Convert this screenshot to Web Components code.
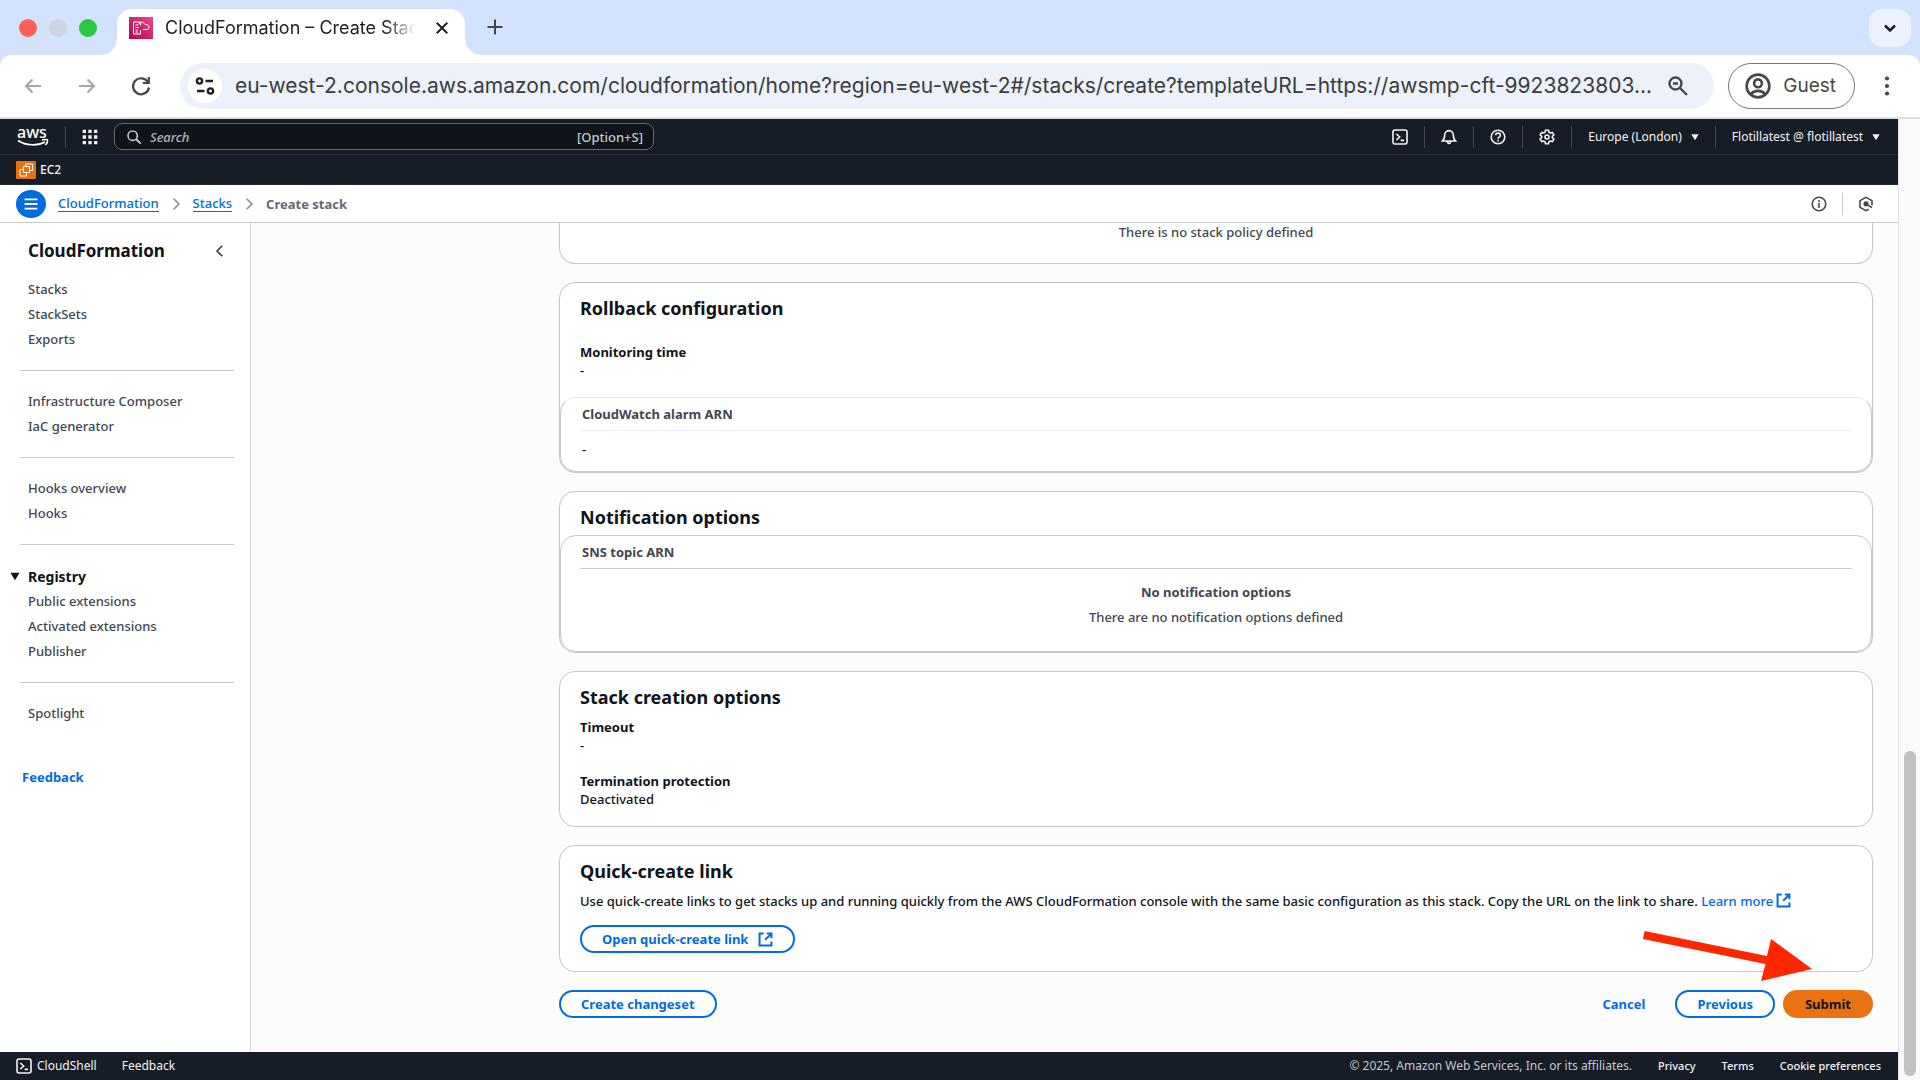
<!DOCTYPE html>
<html lang="en">
<head>
<meta charset="utf-8">
<title>CloudFormation – Create Stack</title>
<style>
  html, body { height: 100%; margin: 0; }
  body {
    font-family: 'Noto Sans', 'Open Sans', sans-serif;
    font-size: 13px;
    font-weight: 500;
    line-height: 18px;
    color: #0f141a;
    overflow: hidden;
    --blue: #006ce0;
    --line: #c6c6cd;
    --navy: #161d26;
    --grey: #424650;
  }
</style>
</head>
<body>
<browser-window>
  <browser-tabs slot="chrome"></browser-tabs>
  <browser-toolbar slot="chrome"></browser-toolbar>
  <console-page>
    <console-header slot="top"></console-header>
    <console-breadcrumbs slot="top"></console-breadcrumbs>
    <side-nav slot="side"></side-nav>

    <panel-card clipped>
      <empty-state>There is no stack policy defined</empty-state>
    </panel-card>

    <panel-card heading="Rollback configuration" spacious>
      <key-value label="Monitoring time">-</key-value>
      <simple-table slot="table" column="CloudWatch alarm ARN" light>-</simple-table>
    </panel-card>

    <panel-card heading="Notification options">
      <simple-table slot="table" column="SNS topic ARN">
        <empty-state heading="No notification options">There are no notification options defined</empty-state>
      </simple-table>
    </panel-card>

    <panel-card heading="Stack creation options">
      <key-value label="Timeout">-</key-value>
      <key-value label="Termination protection">Deactivated</key-value>
    </panel-card>

    <panel-card heading="Quick-create link">
      <quick-create></quick-create>
    </panel-card>

    <form-actions></form-actions>
    <console-footer slot="bottom"></console-footer>
  </console-page>
</browser-window>

<script>
const ICONS = {
  back: '<path d="M20 12H5M11.5 5.500L5 12l6.500 6.500" stroke-width="2"/>',
  forward: '<path d="M4 12h15M12.500 5.500L19 12l-6.500 6.500" stroke-width="2"/>',
  reload: '<path d="M19 8.200A8 8 0 1 0 20 13.500M19.800 3v6h-6" stroke-width="2.200"/>',
  tune: '<circle cx="6.500" cy="7" r="2.600"/><path d="M12.500 7H20M4 17h7.500"/><circle cx="17.500" cy="17" r="2.600"/>',
  zoomout: '<circle cx="9.500" cy="9.500" r="6"/><path d="M14 14l7 7M7 9.500h5"/>',
  person: '<circle cx="12" cy="12" r="10.500"/><circle cx="12" cy="9.500" r="3.600"/><path d="M5.500 19.500c3-4 10-4 13 0"/>',
  kebab: '<g fill="currentColor" stroke="none"><circle cx="12" cy="4.500" r="2.100"/><circle cx="12" cy="12" r="2.100"/><circle cx="12" cy="19.500" r="2.100"/></g>',
  close: '<path d="M5 5l14 14M19 5L5 19" stroke-width="2.600"/>',
  plus: '<path d="M12 3v18M3 12h18" stroke-width="2.400"/>',
  down: '<path d="M6 9l6 6 6-6" stroke-width="3"/>',
  right: '<path d="M8 3l9 9-9 9" stroke-width="2.800"/>',
  left: '<path d="M16 3l-9 9 9 9" stroke-width="3"/>',
  search: '<circle cx="10" cy="10" r="7"/><path d="M15 15l7 7" stroke-width="3"/>',
  grid: '<g fill="currentColor" stroke="none"><path d="M1 1h5v5H1zM9.500 1h5v5h-5zM18 1h5v5h-5zM1 9.500h5v5H1zM9.500 9.500h5v5h-5zM18 9.500h5v5h-5zM1 18h5v5H1zM9.500 18h5v5h-5zM18 18h5v5h-5z"/></g>',
  shell: '<rect x="1.500" y="1.500" width="21" height="21" rx="3"/><path d="M6.500 7.500l5 4.500-5 4.500M13 17h5"/>',
  bell: '<path d="M12 2.500c-4 0-6.500 3-6.500 6.500 0 5-1 7-3.500 9h20c-2.500-2-3.500-4-3.500-9 0-3.500-2.500-6.500-6.500-6.500zM9.500 18.500c0 4 5 4 5 0"/>',
  help: '<circle cx="12" cy="12" r="10.200"/><path d="M8.500 9.500c0-4.500 7-4.500 7 0 0 2.600-3.500 2.600-3.500 5M12 16.200v2.500"/>',
  gear: '<path d="M9.800 1.800h4.400l.8 3 2 1.200 3-.9 2.300 3.800-2.300 2.200v1.800l2.300 2.200-2.300 3.800-3-.9-2 1.200-.8 3H9.800l-.8-3-2-1.200-3 .9-2.300-3.800L4 12.900v-1.800L1.700 8.900 4 5.100l3 .9 2-1.200z"/><circle cx="12" cy="12" r="3"/>',
  info: '<circle cx="12" cy="12" r="10.200"/><path d="M12 10.500V18M12 6v2.600"/>',
  hex: '<path d="M21 14V7l-9-5-9 5v10l9 5 4-2.200"/><circle cx="12" cy="11.500" r="2.600" fill="currentColor"/><path d="M12 12l9 5.500"/>',
  menu: '<path d="M1 4h22M1 12h22M1 20h22" stroke-width="3.200"/>',
  external: '<path d="M9 2.500H2.500v19h19V15M14 2.500h7.500V10M21 3l-9.500 9.500" stroke-width="3.200"/>',
  caret: '<path d="M1 4h22L12 22z" fill="currentColor" stroke="none"/>'
};

class UiIcon extends HTMLElement {
  connectedCallback() {
    const size = this.getAttribute('size') || 16;
    this.attachShadow({ mode: 'open' }).innerHTML = `
      <style>
        :host { display: inline-flex; flex: none; }
        svg { display: block; }
      </style>
      <svg width="${size}" height="${size}" viewBox="0 0 24 24" fill="none" stroke="currentColor" stroke-width="2.400" aria-hidden="true">${ICONS[this.getAttribute('name')]}</svg>
    `;
  }
}

class BrowserWindow extends HTMLElement {
  constructor() {
    super();
    this.attachShadow({ mode: 'open' }).innerHTML = `
      <style>
        :host { display: flex; flex-direction: column; height: 100vh; background: #fff; }
        .view { flex: 1; min-height: 0; display: flex; }
        ::slotted(console-page) { flex: 1; min-width: 0; }
        .scrollbar {
          width: 12px;
          padding: 0 4px 4px 5px;
          border-left: 1px solid #e4e4e4;
          background: #fafafa;
          display: flex;
          flex-direction: column;
          justify-content: flex-end;
        }
        .thumb { height: 34%; border-radius: 6px; background: #c1c1c1; }
      </style>
      <slot name="chrome"></slot>
      <div class="view">
        <slot></slot>
        <div class="scrollbar"><div class="thumb"></div></div>
      </div>
    `;
  }
}

class BrowserTabs extends HTMLElement {
  constructor() {
    super();
    this.attachShadow({ mode: 'open' }).innerHTML = `
      <style>
        :host {
          display: flex;
          align-items: flex-end;
          height: 55px;
          background: #d3e3fd;
          font-family: Inter, 'Liberation Sans', sans-serif;
          font-size: 18px;
          font-weight: 400;
          line-height: 22px;
          color: #1f1f1f;
        }
        button { border: 0; padding: 0; background: none; color: inherit; display: flex; align-items: center; justify-content: center; }
        .lights { display: flex; gap: 12px; padding: 0 20px 18px 19px; }
        .lights i { width: 18px; height: 18px; border-radius: 50%; background: #ff5f57; }
        .lights i:nth-child(2) { background: #cdd4e1; }
        .lights i:nth-child(3) { background: #28c840; }
        .tab {
          position: relative;
          box-sizing: border-box;
          width: 348px;
          height: 46px;
          padding: 0 14px 8px 12px;
          border-radius: 15px 15px 0 0;
          background: #fff;
          display: flex;
          align-items: center;
          gap: 12px;
        }
        .tab::before, .tab::after {
          content: '';
          position: absolute;
          bottom: 0;
          width: 15px;
          height: 15px;
        }
        .tab::before { right: 100%; background: radial-gradient(circle at 0 0, transparent 14px, #fff 15px); }
        .tab::after { left: 100%; background: radial-gradient(circle at 100% 0, transparent 14px, #fff 15px); }
        .title {
          flex: 1;
          white-space: nowrap;
          overflow: hidden;
          -webkit-mask-image: linear-gradient(90deg, #000 88%, transparent);
          mask-image: linear-gradient(90deg, #000 88%, transparent);
        }
        .tab button { padding-left: 5px; }
        .add { width: 24px; height: 24px; margin: 0 auto 16px 18px; color: #474747; }
        .list { width: 42px; height: 38px; margin: 0 9px 8px 0; border-radius: 14px; background: #ecf3fe; }
      </style>
      <div class="lights"><i></i><i></i><i></i></div>
      <div class="tab">
        <svg width="24" height="22" viewBox="0 0 24 22" fill="none" stroke="#fff" aria-hidden="true">
          <defs><linearGradient id="pink" x1="0" y1="1" x2="1" y2="0"><stop stop-color="#b0084d"/><stop offset="1" stop-color="#f0468a"/></linearGradient></defs>
          <path d="M0 0h24v22H0z" fill="url(#pink)" stroke="none"/>
          <path d="M11.500 8.500V5H4.500v12h7v-4M6.500 8H9M6.500 10.500h3.500M6.500 13H9M6.500 15H9"/>
          <path d="M9.500 7.500C10.500 4.500 14.500 4.500 16 7.500c2.500-.2 4 1 4 2.500 0 1.700-1 2.500-3 2.500h-3"/>
        </svg>
        <span class="title">CloudFormation – Create Stack</span>
        <button aria-label="Close tab"><ui-icon name="close" size="18"></ui-icon></button>
      </div>
      <button class="add" aria-label="New tab"><ui-icon name="plus" size="20"></ui-icon></button>
      <button class="list" aria-label="Search tabs"><ui-icon name="down" size="20"></ui-icon></button>
    `;
  }
}

class BrowserToolbar extends HTMLElement {
  constructor() {
    super();
    this.attachShadow({ mode: 'open' }).innerHTML = `
      <style>
        :host { display: block; background: #d3e3fd; }
        .bar {
          display: flex;
          align-items: center;
          padding: 8px 21px;
          border-bottom: 2px solid #dedfe0;
          border-radius: 12px 12px 0 0;
          background: #fff;
          color: #474747;
          font-family: Inter, 'Liberation Sans', sans-serif;
          font-weight: 400;
        }
        button { border: 0; padding: 0; background: none; color: inherit; font: inherit; display: flex; align-items: center; }
        .nav { display: flex; gap: 30px; margin-right: 27px; }
        .nav button:disabled { color: #a3a4a6; }
        .omnibox {
          flex: 1;
          min-width: 0;
          height: 46px;
          box-sizing: border-box;
          padding: 0 24px 0 8px;
          border-radius: 23px;
          background: #ecf1fa;
          display: flex;
          align-items: center;
          gap: 13px;
        }
        .site { width: 34px; height: 34px; border-radius: 50%; background: #fff; justify-content: center; color: #1f1f1f; }
        input {
          flex: 1;
          min-width: 0;
          padding: 0;
          border: 0;
          outline: 0;
          background: none;
          color: #3a3c3e;
          font: 400 21px/28px Inter, 'Liberation Sans', sans-serif;
        }
        .guest {
          height: 46px;
          box-sizing: border-box;
          margin: 0 20px 0 14px;
          padding: 0 18px 0 16px;
          border: 1px solid #747775;
          border-radius: 23px;
          gap: 12px;
          font-size: 19px;
          line-height: 24px;
        }
      </style>
      <div class="bar">
        <div class="nav">
          <button disabled aria-label="Back"><ui-icon name="back" size="24"></ui-icon></button>
          <button disabled aria-label="Forward"><ui-icon name="forward" size="24"></ui-icon></button>
          <button aria-label="Reload"><ui-icon name="reload" size="24"></ui-icon></button>
        </div>
        <div class="omnibox">
          <button class="site" aria-label="View site information"><ui-icon name="tune" size="24"></ui-icon></button>
          <input type="text" aria-label="Address" value="eu-west-2.console.aws.amazon.com/cloudformation/home?region=eu-west-2#/stacks/create?templateURL=https://awsmp-cft-9923823803...">
          <button aria-label="Zoom"><ui-icon name="zoomout" size="24"></ui-icon></button>
        </div>
        <button class="guest"><ui-icon name="person" size="26"></ui-icon>Guest</button>
        <button aria-label="Menu"><ui-icon name="kebab" size="24"></ui-icon></button>
      </div>
    `;
  }
}

class ConsolePage extends HTMLElement {
  constructor() {
    super();
    this.attachShadow({ mode: 'open' }).innerHTML = `
      <style>
        :host { display: flex; flex-direction: column; background: #fcfcfd; }
        .body { flex: 1; min-height: 0; display: flex; }
        main {
          flex: 1;
          min-width: 0;
          overflow: hidden;
          display: flex;
          flex-direction: column;
          gap: 18px;
          padding: 0 25px 0 308px;
        }
      </style>
      <slot name="top"></slot>
      <div class="body">
        <slot name="side"></slot>
        <main><slot></slot></main>
      </div>
      <slot name="bottom"></slot>
    `;
  }
}

class ConsoleHeader extends HTMLElement {
  constructor() {
    super();
    this.attachShadow({ mode: 'open' }).innerHTML = `
      <style>
        :host { display: block; background: var(--navy); color: #f3f3f7; font-size: 12px; }
        .row { display: flex; align-items: center; height: 35px; border-bottom: 1px solid #232b37; padding: 0 18px 0 16px; }
        .favorites { height: 29px; }
        a, button { border: 0; padding: 0; background: none; color: inherit; font: inherit; text-decoration: none; display: flex; align-items: center; }
        .sep { width: 1px; height: 22px; background: #424650; }
        .logo { margin-right: 16px; }
        .apps { margin: 0 16px; }
        .search {
          width: 540px;
          height: 27px;
          box-sizing: border-box;
          padding: 0 10px 0 11px;
          border: 1px solid #656871;
          border-radius: 8px;
          background: #0f141a;
          display: flex;
          align-items: center;
          gap: 8px;
          font-size: 13px;
          color: #c6c6cd;
        }
        .search input { flex: 1; min-width: 0; padding: 0; border: 0; outline: 0; background: none; color: inherit; font: inherit; }
        .search input::placeholder { color: #b4b4bb; font-style: italic; opacity: 1; }
        .tools { margin-left: auto; display: flex; align-items: center; gap: 16px; font-weight: 400; }
        .tools button { gap: 9px; }
        .ec2 { gap: 4px; }
      </style>
      <div class="row">
        <a class="logo" href="#" aria-label="AWS home">
          <svg width="33" height="24" viewBox="0 0 33 24" fill="none" stroke="#fff">
            <text x="1" y="13" fill="#fff" stroke="none" font-size="16">aws</text>
            <path d="M2 15.500c8 5.500 20 5.500 27 1.500M26 15c3-.7 5.500-.5 5.500 0 .2 1-.6 3.500-2 5" stroke-width="1.600"/>
          </svg>
        </a>
        <span class="sep"></span>
        <button class="apps" aria-label="Services"><ui-icon name="grid" size="16"></ui-icon></button>
        <label class="search">
          <ui-icon name="search" size="16"></ui-icon>
          <input type="search" placeholder="Search" aria-label="Search">
          <span>[Option+S]</span>
        </label>
        <div class="tools">
          <button aria-label="CloudShell"><ui-icon name="shell" size="16"></ui-icon></button>
          <span class="sep"></span>
          <button aria-label="Notifications"><ui-icon name="bell" size="16"></ui-icon></button>
          <span class="sep"></span>
          <button aria-label="Help"><ui-icon name="help" size="16"></ui-icon></button>
          <span class="sep"></span>
          <button aria-label="Settings"><ui-icon name="gear" size="16"></ui-icon></button>
          <span class="sep"></span>
          <button>Europe (London)<ui-icon name="caret" size="8"></ui-icon></button>
          <span class="sep"></span>
          <button>Flotillatest @ flotillatest<ui-icon name="caret" size="8"></ui-icon></button>
        </div>
      </div>
      <div class="row favorites">
        <a class="ec2" href="#">
          <svg width="20" height="18" viewBox="0 0 20 18" fill="none" stroke="#fff" aria-hidden="true">
            <rect width="20" height="18" rx="1" fill="#e8700f" stroke="none"/>
            <path d="M7.500 5.500h6v6h-6zM9.500 5.500v-2.500h7v6.500h-3M7.500 8.500H4V15h6.500v-3.500"/>
          </svg>EC2
        </a>
      </div>
    `;
  }
}

class ConsoleBreadcrumbs extends HTMLElement {
  constructor() {
    super();
    this.attachShadow({ mode: 'open' }).innerHTML = `
      <style>
        :host { display: flex; align-items: center; height: 37px; padding: 0 24px 0 16px; border-bottom: 1px solid var(--line); background: #fff; }
        button { border: 0; padding: 0; background: none; color: var(--grey); display: flex; align-items: center; justify-content: center; }
        .menu { width: 30px; height: 28px; border-radius: 50%; background: var(--blue); color: #fff; margin-right: 12px; }
        nav { display: flex; align-items: center; gap: 10px; flex: 1; }
        a { color: var(--blue); text-decoration: none; border-bottom: 1px solid; line-height: 16px; }
        nav ui-icon { color: #8c8c94; }
        b { color: #656871; }
        .sep { width: 1px; height: 22px; background: var(--line); margin: 0 15px; }
      </style>
      <button class="menu" aria-label="Toggle navigation"><ui-icon name="menu" size="14"></ui-icon></button>
      <nav aria-label="Breadcrumbs">
        <a href="#">CloudFormation</a>
        <ui-icon name="right" size="14"></ui-icon>
        <a href="#">Stacks</a>
        <ui-icon name="right" size="14"></ui-icon>
        <b>Create stack</b>
      </nav>
      <button aria-label="Info"><ui-icon name="info" size="16"></ui-icon></button>
      <span class="sep"></span>
      <button aria-label="Tutorials"><ui-icon name="hex" size="16"></ui-icon></button>
    `;
  }
}

class SideNav extends HTMLElement {
  constructor() {
    super();
    this.attachShadow({ mode: 'open' }).innerHTML = `
      <style>
        :host { display: block; width: 250px; border-right: 1px solid #d9d9e0; background: #fff; color: var(--grey); line-height: 25px; }
        header { display: flex; align-items: center; justify-content: space-between; padding: 15px 23px 14px 28px; }
        h2 { margin: 0; font-size: 17px; line-height: 25px; color: #0f141a; }
        button { border: 0; padding: 0; background: none; color: inherit; font: inherit; display: flex; align-items: center; }
        ul { margin: 0; padding: 0 0 0 28px; list-style: none; }
        a { color: inherit; text-decoration: none; display: block; }
        hr { margin: 18px 16px 18px 20px; border: 0; border-top: 1px solid var(--line); }
        .section { gap: 8px; padding-left: 10px; height: 26px; font-size: 14px; font-weight: 700; color: #0f141a; }
        .feedback { margin: 39px 0 0 22px; color: var(--blue); font-weight: 700; }
      </style>
      <header>
        <h2>CloudFormation</h2>
        <button aria-label="Close navigation"><ui-icon name="left" size="14"></ui-icon></button>
      </header>
      <ul>
        <li><a href="#">Stacks</a></li>
        <li><a href="#">StackSets</a></li>
        <li><a href="#">Exports</a></li>
      </ul>
      <hr>
      <ul>
        <li><a href="#">Infrastructure Composer</a></li>
        <li><a href="#">IaC generator</a></li>
      </ul>
      <hr>
      <ul>
        <li><a href="#">Hooks overview</a></li>
        <li><a href="#">Hooks</a></li>
      </ul>
      <hr>
      <button class="section" aria-expanded="true"><ui-icon name="caret" size="10"></ui-icon>Registry</button>
      <ul>
        <li><a href="#">Public extensions</a></li>
        <li><a href="#">Activated extensions</a></li>
        <li><a href="#">Publisher</a></li>
      </ul>
      <hr>
      <ul>
        <li><a href="#">Spotlight</a></li>
      </ul>
      <a class="feedback" href="#">Feedback</a>
    `;
  }
}

class PanelCard extends HTMLElement {
  constructor() {
    super();
    this.attachShadow({ mode: 'open' }).innerHTML = `
      <style>
        :host { display: block; flex: none; border: 1px solid var(--line); border-radius: 16px; background: #fff; }
        /* scrolled under the header, only its lower edge shows */
        :host([clipped]) { border-top: 0; border-radius: 0 0 16px 16px; padding-bottom: 22px; }
        h2 { margin: 0; padding: 13px 20px 0; font-size: 18px; line-height: 24px; }
        .content { display: flex; flex-direction: column; gap: 18px; padding: 9px 20px 18px; }
        :host([spacious]) .content { padding-top: 23px; }
        .table { padding-top: 6px; }
        .content[hidden], .table[hidden] { display: none; }
        .content + .table { padding-top: 0; }
        .content[hidden] + .table { padding-top: 6px; }
        :host([clipped]) .content { padding: 0; }
      </style>
      <h2></h2>
      <div class="content"><slot></slot></div>
      <div class="table"><slot name="table"></slot></div>
    `;
  }
  connectedCallback() {
    const h2 = this.shadowRoot.querySelector('h2');
    const heading = this.getAttribute('heading');
    if (heading) h2.textContent = heading;
    else h2.remove();
    // a part with nothing slotted in takes no room
    this.shadowRoot.querySelectorAll('slot').forEach(slot => {
      const update = () => { slot.parentNode.hidden = slot.assignedElements().length === 0; };
      slot.addEventListener('slotchange', update);
      update();
    });
  }
}

class KeyValue extends HTMLElement {
  connectedCallback() {
    this.attachShadow({ mode: 'open' }).innerHTML = `
      <style>
        :host { display: block; }
        dl, dd { margin: 0; }
        dt { font-weight: 700; }
      </style>
      <dl><dt>${this.getAttribute('label')}</dt><dd><slot></slot></dd></dl>
    `;
  }
}

class EmptyState extends HTMLElement {
  connectedCallback() {
    const heading = this.getAttribute('heading');
    this.attachShadow({ mode: 'open' }).innerHTML = `
      <style>
        :host { display: block; text-align: center; color: var(--grey); }
        :host([heading]) { padding: 5px 0 12px; }
        b { display: block; margin-bottom: 7px; }
      </style>
      ${heading ? `<b>${heading}</b>` : ''}<slot></slot>
    `;
  }
}

class SimpleTable extends HTMLElement {
  connectedCallback() {
    this.attachShadow({ mode: 'open' }).innerHTML = `
      <style>
        :host { display: block; border: 1px solid var(--line); border-radius: 16px; padding: 0 19px; }
        :host([light]) { border-top-color: #e4e4e8; }
        table { width: 100%; border-collapse: separate; border-spacing: 0; }
        th, td { text-align: left; padding: 0 2px; }
        th { height: 32px; border-bottom: 1px solid var(--line); color: var(--grey); font-weight: 700; }
        :host([light]) th { border-color: #ebebf0; }
        td { padding: 9px 2px 13px; }
      </style>
      <table>
        <thead><tr><th scope="col">${this.getAttribute('column')}</th></tr></thead>
        <tbody><tr><td><slot></slot></td></tr></tbody>
      </table>
    `;
  }
}

class ConsoleButton extends HTMLElement {
  constructor() {
    super();
    this.attachShadow({ mode: 'open' }).innerHTML = `
      <style>
        :host { display: inline-flex; }
        button {
          height: 28px;
          box-sizing: border-box;
          padding: 0 20px;
          border: 2px solid var(--blue);
          border-radius: 14px;
          background: #fff;
          color: var(--blue);
          font: inherit;
          font-weight: 700;
          display: flex;
          align-items: center;
          gap: 10px;
        }
        :host([variant=link]) button { border-color: transparent; background: none; }
        :host([variant=primary]) button { border-color: #ec7211; background: #ec7211; color: #0f141a; }
      </style>
      <button type="button"><slot></slot></button>
    `;
  }
}

class QuickCreate extends HTMLElement {
  constructor() {
    super();
    this.attachShadow({ mode: 'open' }).innerHTML = `
      <style>
        :host { display: block; }
        p { margin: 0 0 15px; }
        a { color: var(--blue); text-decoration: none; }
        ui-icon { vertical-align: -2px; }
      </style>
      <p>Use quick-create links to get stacks up and running quickly from the AWS CloudFormation console with the same basic configuration as this stack. Copy the URL on the link to share. <a href="#">Learn more <ui-icon name="external" size="15"></ui-icon></a></p>
      <console-button>Open quick-create link<ui-icon name="external" size="15"></ui-icon></console-button>
    `;
  }
}

class FormActions extends HTMLElement {
  constructor() {
    super();
    this.attachShadow({ mode: 'open' }).innerHTML = `
      <style>
        :host { display: flex; gap: 8px; position: relative; }
        .first { margin-right: auto; }
        .arrow { position: absolute; right: 57px; top: -63px; pointer-events: none; }
      </style>
      <console-button class="first">Create changeset</console-button>
      <console-button variant="link">Cancel</console-button>
      <console-button>Previous</console-button>
      <console-button variant="primary">Submit</console-button>
      <svg class="arrow" width="176" height="57" viewBox="0 0 176 57" aria-hidden="true">
        <path d="M4.500 4L3 12l122.500 25-4.500 17 51-12-41-30-4 17z" fill="#ff2600"/>
      </svg>
    `;
  }
}

class ConsoleFooter extends HTMLElement {
  constructor() {
    super();
    this.attachShadow({ mode: 'open' }).innerHTML = `
      <style>
        :host { display: flex; align-items: center; height: 28px; padding: 0 17px 0 16px; background: var(--navy); color: #f3f3f7; font-size: 11px; }
        a, button { border: 0; padding: 0; background: none; color: inherit; font: inherit; text-decoration: none; display: flex; align-items: center; gap: 5px; }
        .left { display: flex; gap: 25px; font-size: 12px; font-weight: 400; margin-right: auto; }
        .right { display: flex; gap: 26px; }
        .copy { color: #c6c6cd; font-size: 12px; font-weight: 400; }
      </style>
      <div class="left">
        <button><ui-icon name="shell" size="16"></ui-icon>CloudShell</button>
        <a href="#">Feedback</a>
      </div>
      <div class="right">
        <span class="copy">© 2025, Amazon Web Services, Inc. or its affiliates.</span>
        <a href="#">Privacy</a>
        <a href="#">Terms</a>
        <a href="#">Cookie preferences</a>
      </div>
    `;
  }
}

customElements.define('ui-icon', UiIcon);
customElements.define('browser-window', BrowserWindow);
customElements.define('browser-tabs', BrowserTabs);
customElements.define('browser-toolbar', BrowserToolbar);
customElements.define('console-page', ConsolePage);
customElements.define('console-header', ConsoleHeader);
customElements.define('console-breadcrumbs', ConsoleBreadcrumbs);
customElements.define('side-nav', SideNav);
customElements.define('panel-card', PanelCard);
customElements.define('key-value', KeyValue);
customElements.define('empty-state', EmptyState);
customElements.define('simple-table', SimpleTable);
customElements.define('console-button', ConsoleButton);
customElements.define('quick-create', QuickCreate);
customElements.define('form-actions', FormActions);
customElements.define('console-footer', ConsoleFooter);
</script>
</body>
</html>
